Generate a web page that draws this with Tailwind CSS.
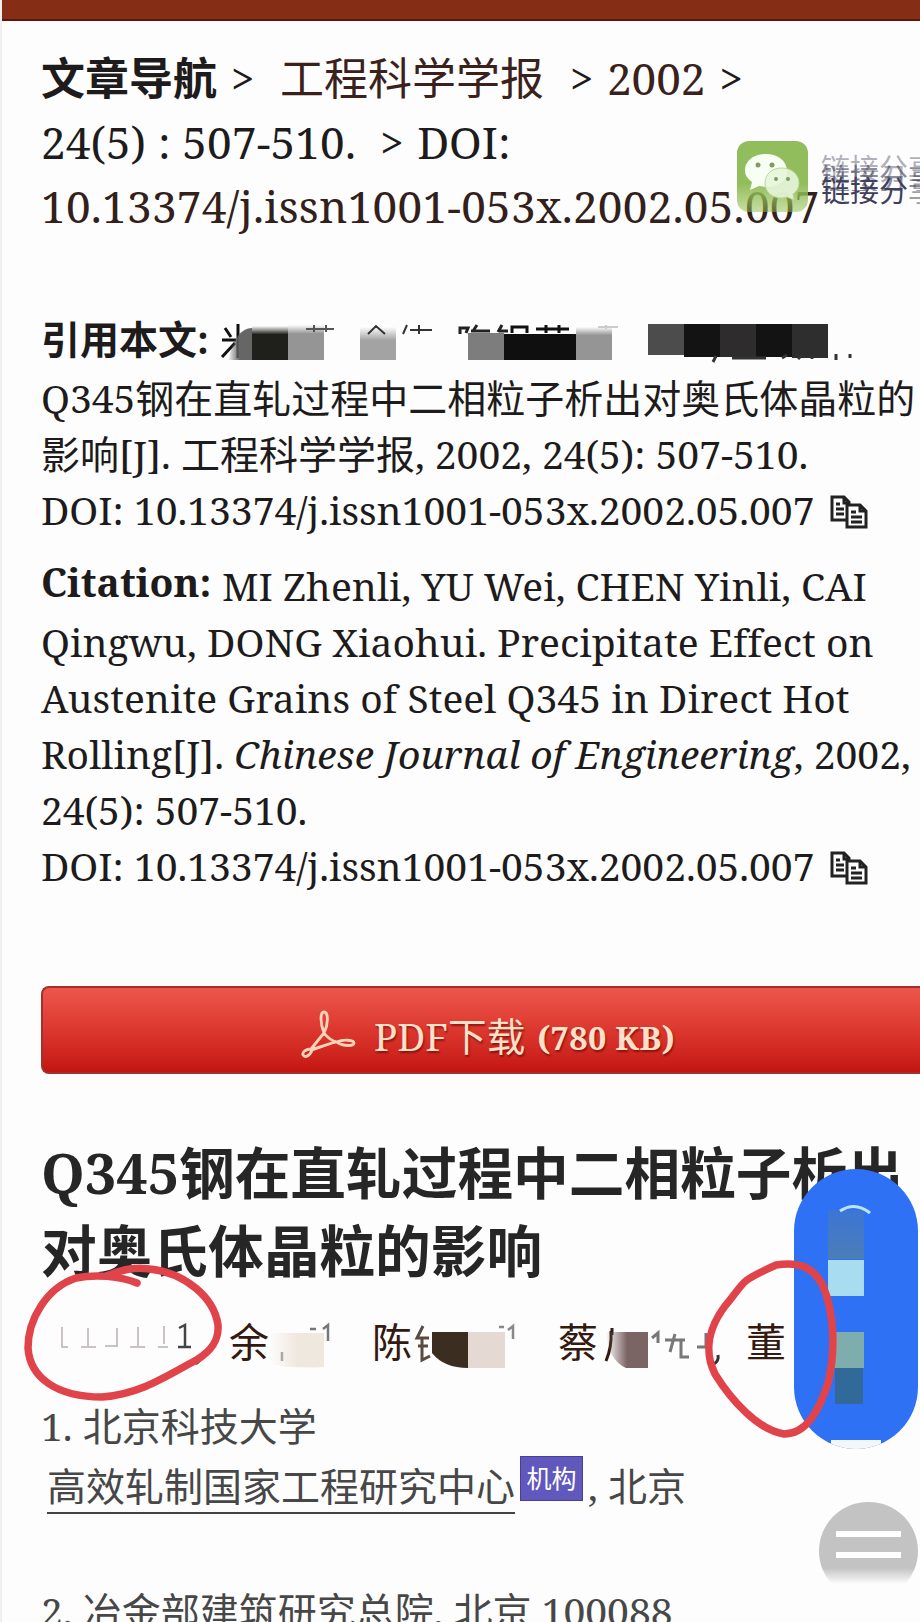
<!DOCTYPE html>
<html lang="zh-CN">
<head>
  <meta charset="UTF-8" />
  <meta name="viewport" content="width=device-width, initial-scale=1.0"/>
  <title>工程科学学报</title>
  <script src="https://cdn.jsdelivr.net/npm/@tailwindcss/browser@4"></script>
</head>
<body class="relative w-[920px] h-[1622px] overflow-hidden bg-[#fdfdfd] border-l-2 border-[#efefef] font-['Noto_Serif','DejaVu_Serif_Condensed','Noto_Sans_CJK_SC',serif] text-[#1d1b1b] whitespace-nowrap">

  <!-- Top bar -->
  <header class="-ml-0.5 h-[21px] bg-[#862d15] border-b-2 border-[#5f1608]"></header>

  <main class="pl-[39px] pt-[25px]">

    <!-- Breadcrumb -->
    <nav class="text-[44px] leading-[64px]">
      <div class="flex">
        <strong>文章导航</strong>
        <span class="ml-[14px] w-[49px] text-[42px]">&gt;</span>
        <a class="text-[#3a211b]">工程科学学报</a>
        <span class="ml-[26px] w-[37px] text-[42px]">&gt;</span>
        <a class="text-[#3a211b]">2002</a>
        <span class="ml-[14px] text-[42px]">&gt;</span>
      </div>
      <div class="flex">
        <span class="tracking-[0.2px]">24(5) : 507-510.</span>
        <span class="ml-[24px] w-[37px] text-[42px]">&gt;</span>
        <span>DOI:</span>
      </div>
      <div class="text-[#33201b] tracking-[0.3px]">10.13374/j.issn1001-053x.2002.05.007</div>
    </nav>

    <!-- Chinese citation -->
    <section class="mt-[73px] text-[39px] leading-[56px]">
      <div class="h-[59px]"><strong>引用本文:</strong></div>
      <p>Q345钢在直轧过程中二相粒子析出对奥氏体晶粒的</p>
      <p>影响[J]. 工程科学学报, 2002, 24(5): 507-510.</p>
      <p class="flex items-center">
        <span>DOI: 10.13374/j.issn1001-053x.2002.05.007</span>
        <svg class="ml-4 mt-1 w-[38px] h-[34px]" viewBox="0 0 38 34" fill="none" stroke="#222" stroke-width="3">
          <path d="M16 25H2V2h12l5 5v3M14 2v6h5M6 9h4M6 14h8M6 19h8"/>
          <path d="M17 10h13l6 6v16H17zM30 10v6h6M21 17h5M21 22h11M21 27h11"/>
        </svg>
      </p>
    </section>

    <!-- English citation -->
    <section class="mt-5 text-[39px] leading-[56px]">
      <p class="flex"><strong class="relative -top-1 w-[181px]">Citation:</strong><span>MI Zhenli, YU Wei, CHEN Yinli, CAI</span></p>
      <p class="tracking-[0.03px]">Qingwu, DONG Xiaohui. Precipitate Effect on</p>
      <p class="tracking-[0.03px]">Austenite Grains of Steel Q345 in Direct Hot</p>
      <p class="tracking-[0.03px]">Rolling[J]. <em>Chinese Journal of Engineering</em>, 2002,</p>
      <p>24(5): 507-510.</p>
      <p class="flex items-center">
        <span>DOI: 10.13374/j.issn1001-053x.2002.05.007</span>
        <svg class="ml-4 mt-1 w-[38px] h-[34px]" viewBox="0 0 38 34" fill="none" stroke="#222" stroke-width="3">
          <path d="M16 25H2V2h12l5 5v3M14 2v6h5M6 9h4M6 14h8M6 19h8"/>
          <path d="M17 10h13l6 6v16H17zM30 10v6h6M21 17h5M21 22h11M21 27h11"/>
        </svg>
      </p>
    </section>

    <!-- Download button -->
    <a class="mt-[92px] flex h-[88px] items-center rounded-l-lg border-2 border-r-0 border-[#a3302b] bg-linear-to-b from-[#ed564b] via-[#dc372e] to-[#c41410] pl-[258px] text-[#fde0c8] text-shadow-[1px_2px_2px_rgb(90_0_0/0.6)]">
      <svg class="mt-2 w-[56px] h-[50px]" viewBox="0 0 56 50" fill="none" stroke="#fbd3b8" stroke-width="2.8" stroke-linejoin="round">
        <path d="M23 24C19 14 19 3 23 3s5 11 0 21M23 24L10 40c-5 0-9 3-8 6 2 3 7 1 9-5l20-7M23 24c3 4 8 8 13 9l-5 1M36 33c6-3 17-2 17 1s-10 4-17-1M31 34l-19 6"/>
      </svg>
      <span class="ml-[17px] mt-3 text-[38.6px] leading-[56px]">PDF下载</span>
      <strong class="ml-[12px] mt-4 text-[32.5px] leading-[56px] tracking-[0.3px]">(780 KB)</strong>
    </a>

    <!-- Title -->
    <h1 class="mt-[59px] text-[55.7px] leading-[78px] font-bold text-[#262626]">
      <span class="inline-block w-[138px]">Q345</span>钢在直轧过程中二相粒子析出<br>对奥氏体晶粒的影响
    </h1>

    <!-- Authors -->
    <div class="mt-[25px] flex text-[40px] leading-[56px] text-[#33190f]">
      <span class="ml-[188px] w-[143px]">余</span>
      <span class="w-[186px]">陈</span>
      <span class="w-[188px]">蔡</span>
      <span>董</span>
    </div>

    <!-- Affiliations -->
    <div class="mt-[26px] text-[39px] leading-[60px] text-[#474747]">
      <p>1. 北京科技大学</p>
      <div class="flex">
        <a class="ml-[6px] h-[58px] w-[468px] border-b-2 border-[#444]">高效轧制国家工程研究中心</a>
        <span class="ml-[5px] h-[45px] w-[63px] border border-[#4a3f96] bg-[#6058bd] text-center text-[25px] leading-[42px] text-white">机构</span>
        <span class="ml-[5px]">, 北京</span>
      </div>
      <p class="mt-[65px]">2. 冶金部建筑研究总院, 北京 100088</p>
    </div>
  </main>

  <!-- WeChat share -->
  <div class="absolute left-[735px] top-[141px] h-[71px] w-[71px] rounded-[12px] bg-linear-to-b from-[#92bd5c] from-60% to-[#92c04b]/50">
    <svg class="h-full w-full" viewBox="0 0 71 71">
      <path d="M29 13c12 0 21 7 21 17S42 46 29 46l-7-1-9 4 2-8c-5-4-7-7-7-12C8 20 17 13 29 13z" fill="#f7fff2"/>
      <path d="M45 27c10 0 17 7 17 15 0 5-2 8-6 11l1 6-7-3-5 1c-10 0-17-6-17-15s7-15 17-15z" fill="#e6f5dc" fill-opacity=".9" stroke="#b9d79b"/>
      <g fill="#7d9b69"><circle cx="21" cy="24" r="2.5"/><circle cx="35" cy="24" r="2.5"/><circle cx="39" cy="38" r="2"/><circle cx="51" cy="38" r="2"/></g>
    </svg>
  </div>
  <div class="absolute left-[819px] top-[151px] h-[58px] w-[101px] overflow-hidden text-[29px] leading-[36px] text-[#3f405b]">
    <div class="absolute top-0 opacity-40">链接分享</div>
    <div class="absolute top-[10px] h-[30px] overflow-hidden opacity-60">链接分享</div>
    <div class="absolute top-[22px]">链接分<span class="opacity-50">享</span></div>
  </div>

  <!-- Floating pill -->
  <div class="absolute left-[792px] top-[1169px] h-[280px] w-[124px] overflow-hidden rounded-[62px] bg-[#2f71f5]">
    <div class="absolute left-[34px] top-[41px] h-[49px] w-[36px] bg-linear-to-b from-[#3d75d5] to-[#4b7db8]"></div>
    <div class="absolute left-[34px] top-[91px] h-[36px] w-[36px] bg-[#a8dcf0]"></div>
    <div class="absolute left-[40px] top-[163px] h-[36px] w-[30px] bg-[#7fadae]"></div>
    <div class="absolute left-[41px] top-[199px] h-[36px] w-[28px] bg-[#316a98]"></div>
    <div class="absolute left-[37px] top-[271px] h-[10px] w-[50px] bg-[#f4f7fa]"></div>
  </div>

  <!-- Floating menu -->
  <div class="absolute left-[817px] top-[1502px] h-[82px] w-[99px] overflow-hidden">
    <div class="flex h-[98px] flex-col items-center gap-[15px] rounded-full bg-[#c3c3c3] pt-[29px]">
      <span class="h-[6px] w-[65px] shrink-0 bg-white"></span>
      <span class="h-[6px] w-[65px] shrink-0 bg-white"></span>
    </div>
    <div class="absolute bottom-0 h-4 w-full bg-linear-to-b from-transparent to-[#fdfdfd]"></div>
  </div>

  <!-- Mosaic blocks, leftover strokes and red pen marks -->
  <svg class="absolute left-0 top-0 h-[1622px] w-[918px]" viewBox="2 0 918 1622" fill="none">
    <defs>
      <linearGradient id="fade"><stop stop-color="#555" stop-opacity="0"/><stop offset=".5" stop-color="#666"/></linearGradient>
      <linearGradient id="edge"><stop stop-color="#7b6464" stop-opacity="0"/><stop offset=".5" stop-color="#7b6464"/></linearGradient>
      <linearGradient id="down" x2="0" y2="1"><stop stop-color="#a3a3a3" stop-opacity="0"/><stop offset=".4" stop-color="#a3a3a3"/></linearGradient>
      <linearGradient id="dark" x2="0" y2="1"><stop stop-color="#1f1f1c" stop-opacity="0"/><stop offset=".25" stop-color="#1f1f1c"/></linearGradient>
      <linearGradient id="grey" x2="0" y2="1"><stop stop-color="#959595" stop-opacity="0"/><stop offset=".25" stop-color="#959595"/></linearGradient>
      <linearGradient id="cream"><stop stop-color="#efe5dc" stop-opacity="0"/><stop offset=".5" stop-color="#efe8df"/></linearGradient>
    </defs>
    <path d="M225 328l6 9M238 324v34M222 340h14M235 343l-13 14" stroke="#111" stroke-width="3"/>
    <path d="M228 360q8-32 24-32v32z" fill="url(#fade)"/>
    <path d="M252 326h36v34h-36z" fill="url(#dark)"/>
    <path d="M288 325h36v35h-36z" fill="url(#grey)"/>
    <path d="M306 329h28M314 325v7M326 325v7" stroke="#555" stroke-width="2"/>
    <path d="M360 327h36v33h-36z" fill="url(#down)"/>
    <path d="M368 334l8-8 9 8M407 325l-4 9M410 330h22M419 325v9" stroke="#333" stroke-width="2"/>
    <path d="M460 334v-6h8l-2 5M477 325l-4 6M471 331h19M502 325l-4 7M498 331h10" stroke="#222" stroke-width="3"/>
    <path d="M468 333h36v27h-36z" fill="#7d7d7d"/>
    <path d="M504 334h72v26h-72z" fill="#0f0f0f"/>
    <path d="M576 327h36v33h-36z" fill="url(#grey)"/>
    <path d="M512 333v-6h15v6M536 329h33M546 325v8M559 325v8" stroke="#111" stroke-width="3"/>
    <path d="M606 325v4M598 327h20" stroke="#ccc" stroke-width="2"/>
    <path d="M648 324h36v31h-36z" fill="#4c4c4c"/>
    <path d="M684 324h36v33h-36zM756 324h36v33h-36z" fill="#131313"/>
    <path d="M720 324h36v33h-36z" fill="#2f2c2d"/>
    <path d="M792 324h36v34h-36z" fill="#2e2e2e"/>
    <path d="M716 356l-3 6M732 358h34M782 358l5-3M798 359l4-4M812 359v-4M836 354v6M850 354v4" stroke="#333" stroke-width="3"/>

    <!-- author row -->
    <g stroke="#b9b0b0" stroke-width="1.5">
      <path d="M62 1327v20h6M88 1328v18M81 1347h15M105 1346h13M117 1328v18M138 1327v19M130 1347h15M164 1326v18M158 1347h10"/>
      <path d="M179 1328l6-3v22M178 1347h13" stroke="#444" stroke-width="2.5"/>
      <path d="M196 1364q5-3 4-8" stroke="#333" stroke-width="2.5"/>
      <path d="M282 1352v9M310 1329h6" stroke="#777" stroke-width="2.5"/>
      <path d="M323 1329l5-4v16" stroke="#777" stroke-width="2.5"/>
      <path d="M423 1326l-6 12h12M422 1339v21l8-4M418 1346h10" stroke="#5a4a40" stroke-width="3"/>
      <path d="M499 1327h5M508 1330l5-4v13" stroke="#888" stroke-width="2.5"/>
      <path d="M612 1328v7M606 1361q6-14 5-30" stroke="#33190f" stroke-width="3"/>
      <path d="M652 1338l6-5v10M665 1340h20M675 1334l-5 18M681 1340v17h8M697 1347h12M706 1333v14" stroke="#777" stroke-width="3"/>
      <path d="M714 1364q5-3 4-9" stroke="#333" stroke-width="3"/>
    </g>
    <path d="M270 1333h54v34q-30 2-54-3z" fill="url(#cream)"/>
    <path d="M432 1332h36v36q-24 0-36-15z" fill="#3b2e20"/>
    <path d="M468 1332h37v36h-37z" fill="#e4d9d3"/>
    <path d="M606 1332h42v36h-22q-18-8-20-36z" fill="url(#edge)"/>
    <path d="M840 1211q15-10 30 2" stroke="#b9e6ff" stroke-width="3"/>

    <g stroke="#e0444a" stroke-width="7.5" stroke-linecap="round" stroke-linejoin="round">
      <path d="M137 1283C120 1276 95 1274 76 1278C46 1288 28 1320 28 1348C30 1378 57 1397 102 1397C140 1394 165 1377 198 1359C212 1350 219 1340 218 1325C214 1297 185 1273 150 1269C130 1266 118 1272 106 1276"/>
      <path d="M776 1265C800 1261 814 1268 823 1286C834 1312 836 1350 828 1383C818 1414 805 1434 784 1434C758 1430 731 1400 715 1374C703 1350 710 1326 725 1306C734 1296 740 1285 747 1280C756 1274 765 1270 774 1266"/>
    </g>
  </svg>

</body>
</html>
